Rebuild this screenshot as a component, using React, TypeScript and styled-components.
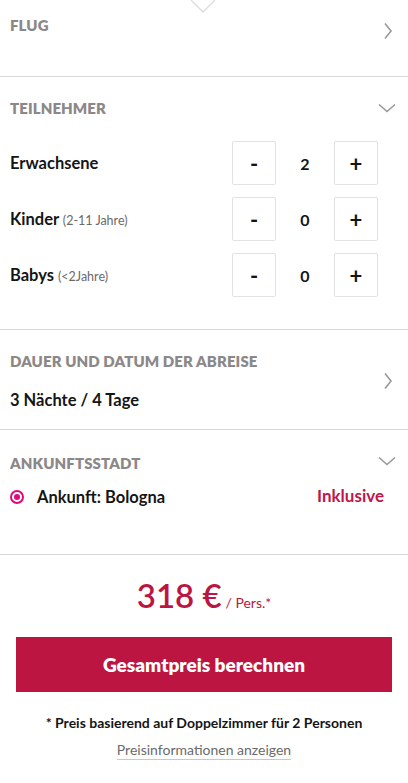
import React, { useState } from 'react';
import styled, { createGlobalStyle } from 'styled-components';

const GlobalStyle = createGlobalStyle`
  body {
    margin: 0;
    background: #fff;
    font-family: Lato, "Open Sans", Arial, sans-serif;
    color: #151515;
  }
`;

const Page = styled.div`
  position: relative;
  width: 408px;
  background: #fff;
`;

const Notch = styled.svg`
  position: absolute;
  top: 0;
  left: 190px;
`;

const Section = styled.div<{ $top: number; $bottom: number }>`
  padding: ${(p) => p.$top}px 12px ${(p) => p.$bottom}px 10px;
  border-bottom: 1px solid #d9d9d9;
`;

const HeaderRow = styled.div`
  display: flex;
  justify-content: space-between;
  align-items: flex-start;
`;

const Title = styled.div`
  font-size: 15px;
  font-weight: 800;
  line-height: 20px;
  color: #8c8888;
  letter-spacing: 0.1px;
`;

const ChevronBox = styled.div<{ $mt: number }>`
  margin-top: ${(p) => p.$mt}px;
  display: flex;
`;

const SplitRow = styled.div`
  display: flex;
  justify-content: space-between;
  align-items: center;
`;

const Value = styled.div`
  margin-top: 19px;
  font-size: 16.5px;
  font-weight: 700;
  line-height: 20px;
`;

const Rows = styled.div`
  display: flex;
  flex-direction: column;
  gap: 12px;
  margin-top: 23px;
  padding-right: 18px;
`;

const PersonRow = styled.div`
  display: flex;
  align-items: center;
  justify-content: space-between;
  height: 44px;
`;

const Label = styled.div`
  font-size: 16.5px;
  font-weight: 700;
  margin-top: -1px;
`;

const Hint = styled.span`
  font-size: 12.5px;
  font-weight: 400;
  color: #6a6a6a;
`;

const Stepper = styled.div`
  display: flex;
  align-items: center;
`;

const StepButton = styled.button`
  width: 44px;
  height: 44px;
  border: 1px solid #e2e2e2;
  border-radius: 2px;
  background: #fff;
  color: #151515;
  font-family: inherit;
  font-size: 22px;
  font-weight: 700;
  padding: 0;
  display: flex;
  align-items: center;
  justify-content: center;
  cursor: pointer;
`;

const Count = styled.div`
  width: 58px;
  text-align: center;
  font-size: 16px;
  font-weight: 700;
`;

const RadioRow = styled.div`
  display: flex;
  align-items: center;
  justify-content: space-between;
  margin-top: 14px;
  padding-right: 12px;
`;

const RadioLabel = styled.label`
  display: flex;
  align-items: center;
  gap: 13px;
  font-size: 16.5px;
  font-weight: 700;
`;

const Radio = styled.span`
  width: 10px;
  height: 10px;
  border: 2px solid #e0087e;
  border-radius: 50%;
  display: flex;
  align-items: center;
  justify-content: center;

  &::after {
    content: '';
    width: 6px;
    height: 6px;
    border-radius: 50%;
    background: #e0087e;
  }
`;

const Included = styled.div`
  font-size: 17px;
  font-weight: 700;
  color: #c0144a;
  margin-top: -4px;
`;

const Footer = styled.div`
  display: flex;
  flex-direction: column;
  align-items: center;
  padding: 20px 16px 20px;
`;

const Price = styled.div`
  color: #bd1541;
  font-size: 33px;
  font-weight: 600;
  line-height: 40px;
`;

const PerPerson = styled.span`
  font-size: 14px;
  font-weight: 400;
  color: #bd1541;
  margin-left: 4px;
`;

const CalcButton = styled.button`
  margin-top: 14px;
  width: 100%;
  height: 55px;
  border: none;
  background: #bd1542;
  color: #fff;
  font-family: inherit;
  font-size: 19px;
  font-weight: 800;
  cursor: pointer;
`;

const Note = styled.div`
  margin-top: 22px;
  font-size: 14px;
  font-weight: 700;
  color: #151515;
`;

const InfoLink = styled.a`
  margin-top: 10px;
  font-size: 14px;
  color: #6a6a6a;
  text-decoration: none;
  border-bottom: 1px solid #c8c8c8;
  padding-bottom: 1px;
  cursor: pointer;
`;

const ChevronRight = () => (
  <svg width="12" height="18" viewBox="0 0 12 18">
    <polyline points="1,1.5 7,9 1,16.5" fill="none" stroke="#999" strokeWidth="1.6" />
  </svg>
);

const ChevronDown = () => (
  <svg width="18" height="10" viewBox="0 0 18 10">
    <polyline points="1,1.5 9,8.5 17,1.5" fill="none" stroke="#999" strokeWidth="1.6" />
  </svg>
);

type Group = { key: string; name: string; hint?: string };

const groups: Group[] = [
  { key: 'adults', name: 'Erwachsene' },
  { key: 'kids', name: 'Kinder', hint: '(2-11 Jahre)' },
  { key: 'babies', name: 'Babys', hint: '(<2Jahre)' },
];

export default function App() {
  const [counts, setCounts] = useState<Record<string, number>>({ adults: 2, kids: 0, babies: 0 });

  const change = (key: string, d: number) =>
    setCounts((c) => ({ ...c, [key]: Math.max(0, c[key] + d) }));

  return (
    <Page>
      <GlobalStyle />
      <Notch width="28" height="14" viewBox="0 0 28 14">
        <polyline points="1,0 13,12 25,0" fill="none" stroke="#dcdcdc" strokeWidth="1.3" />
      </Notch>

      <Section $top={15} $bottom={36}>
        <HeaderRow>
          <Title>FLUG</Title>
          <ChevronBox $mt={7}>
            <ChevronRight />
          </ChevronBox>
        </HeaderRow>
      </Section>

      <Section $top={21} $bottom={32}>
        <HeaderRow>
          <Title>TEILNEHMER</Title>
          <ChevronBox $mt={5}>
            <ChevronDown />
          </ChevronBox>
        </HeaderRow>
        <Rows>
          {groups.map((g) => (
            <PersonRow key={g.key}>
              <Label>
                {g.name} {g.hint && <Hint>{g.hint}</Hint>}
              </Label>
              <Stepper>
                <StepButton onClick={() => change(g.key, -1)}>-</StepButton>
                <Count>{counts[g.key]}</Count>
                <StepButton onClick={() => change(g.key, 1)}>+</StepButton>
              </Stepper>
            </PersonRow>
          ))}
        </Rows>
      </Section>

      <Section $top={21} $bottom={19}>
        <SplitRow>
          <div>
            <Title>DAUER UND DATUM DER ABREISE</Title>
            <Value>3 Nächte / 4 Tage</Value>
          </div>
          <ChevronRight />
        </SplitRow>
      </Section>

      <Section $top={23} $bottom={47}>
        <HeaderRow>
          <Title>ANKUNFTSSTADT</Title>
          <ChevronBox $mt={3}>
            <ChevronDown />
          </ChevronBox>
        </HeaderRow>
        <RadioRow>
          <RadioLabel>
            <Radio />
            Ankunft: Bologna
          </RadioLabel>
          <Included>Inklusive</Included>
        </RadioRow>
      </Section>

      <Footer>
        <Price>
          318 €<PerPerson>/ Pers.*</PerPerson>
        </Price>
        <CalcButton>Gesamtpreis berechnen</CalcButton>
        <Note>* Preis basierend auf Doppelzimmer für 2 Personen</Note>
        <InfoLink>Preisinformationen anzeigen</InfoLink>
      </Footer>
    </Page>
  );
}
